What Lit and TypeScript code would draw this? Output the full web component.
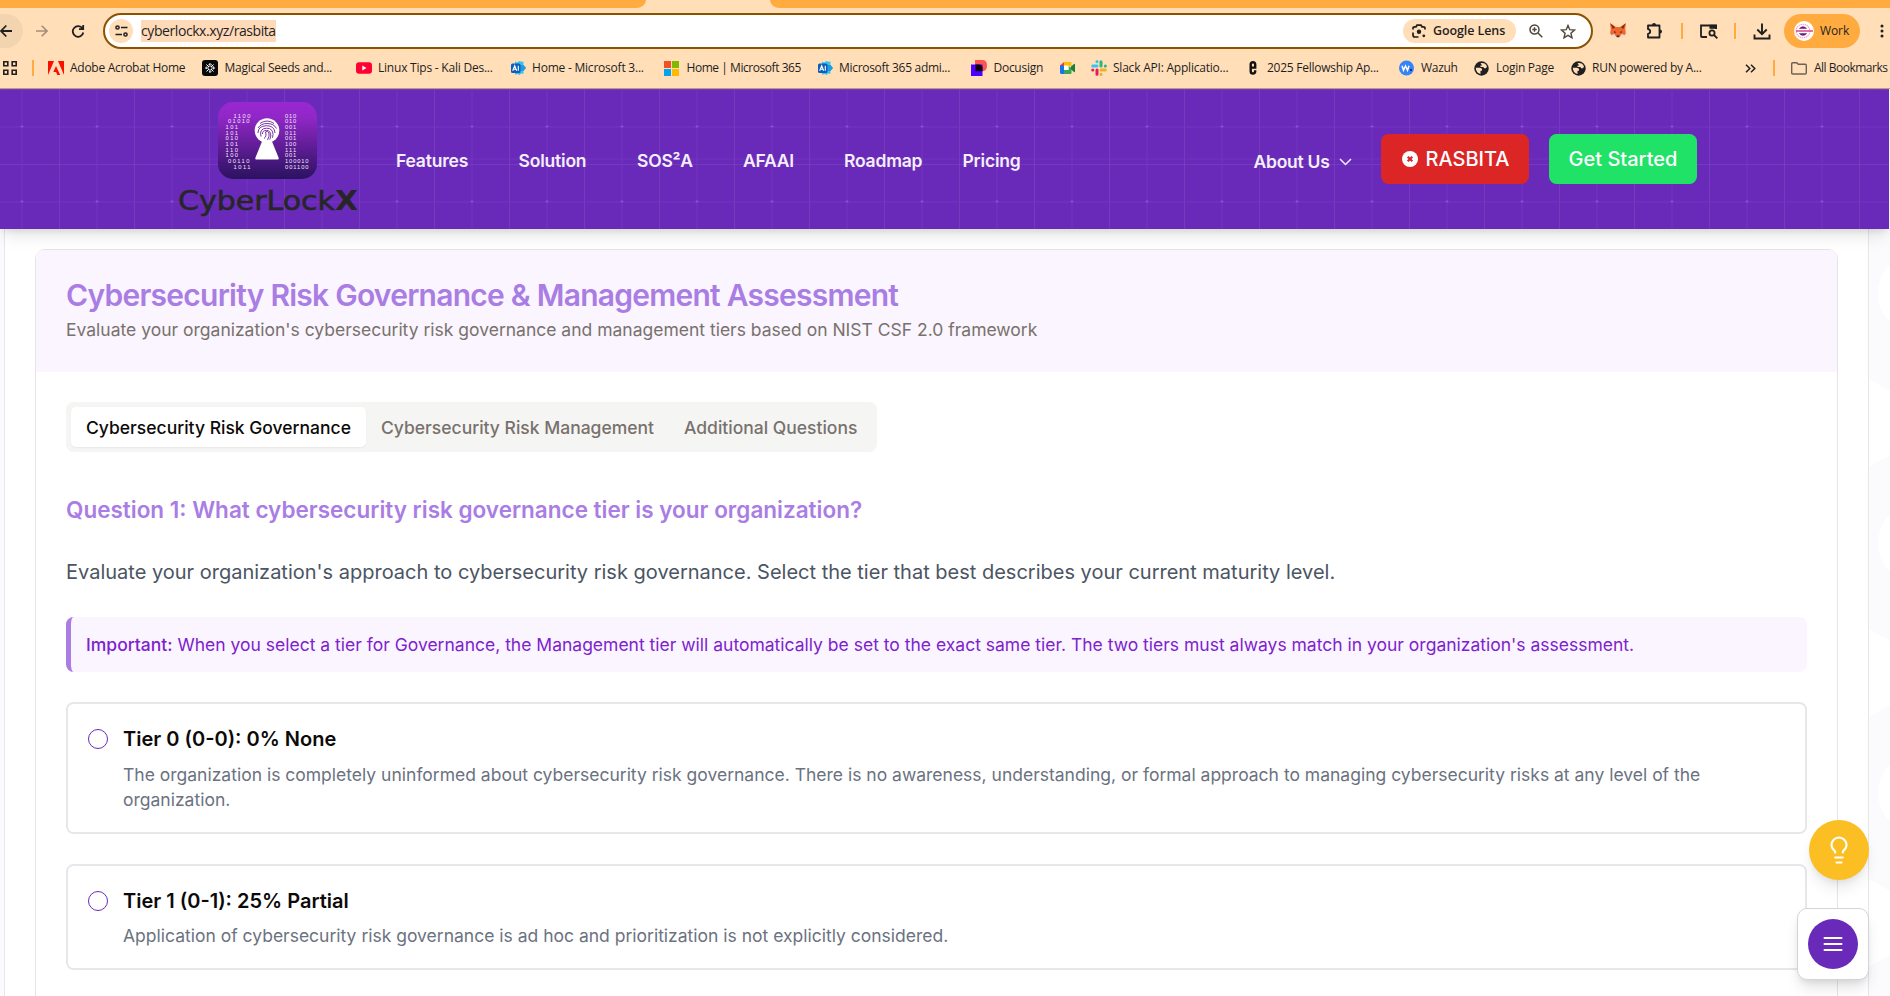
import { LitElement, html, svg, css, nothing } from "lit";
import { customElement, state } from "lit/decorators.js";

const adobe = svg`<svg width="16" height="16" viewBox="0 0 16 16"><path fill="#fa0f00" d="M0 1h6L0 15zM10 1h6v14zM8 6l4.200 9H9.300l-1.200-3H5.300z"/></svg>`;
const seeds = svg`<svg width="16" height="16" viewBox="0 0 16 16"><rect width="16" height="16" rx="3" fill="#0a0a0a"/><g stroke="#fff" stroke-width="1" fill="none"><path d="M8 3v10M3 8h10M4.500 4.500l7 7M11.500 4.500l-7 7"/><circle cx="8" cy="8" r="3.600" stroke-dasharray="1.500 1"/></g><circle cx="8" cy="8" r="1.300" fill="#0a0a0a"/></svg>`;
const tube = svg`<svg width="16" height="16" viewBox="0 0 16 16"><rect y="2.300" width="16" height="11.400" rx="3" fill="#ff0033"/><path fill="#fff" d="M6.300 5.600v4.800L10.500 8z"/></svg>`;
const admin = svg`<svg width="15" height="16" viewBox="0 0 15 16"><path fill="#35c1f1" d="M4 1.500l2 1L8.500 1l2 .8 2-.3-.2 3.300 2.500 3-2.500 3 .2 3-2.500-.2L8.500 15l-2-1-2.500.8z"/><path fill="#1f9ce0" d="M9 5h3.500L15 8l-2.500 3H9z"/><rect y="3.500" width="9.500" height="9.500" rx="1.500" fill="#0f5fb8"/><path stroke="#fff" stroke-width="1.100" fill="none" d="M1.700 10.700l2-5 2 5M2.400 9.200h2.700M7.300 5.700v5"/></svg>`;
const ms = svg`<svg width="15" height="15" viewBox="0 0 15 15"><path fill="#f25022" d="M0 0h7v7H0z"/><path fill="#7fba00" d="M8 0h7v7H8z"/><path fill="#00a4ef" d="M0 8h7v7H0z"/><path fill="#ffb900" d="M8 8h7v7H8z"/></svg>`;
const docu = svg`<svg width="16" height="16" viewBox="0 0 16 16"><path fill="#ff5252" d="M4 0h7.500Q16 0 16 5.500 16 11 11.500 11.300H4z"/><path fill="#4c00ff" d="M0 4.500h11.500V16H0z"/><path fill="#0c0010" d="M4.500 4.500h4Q11.500 5 11.500 8v3.300h-7z"/></svg>`;
const meet = svg`<svg width="15" height="14" viewBox="0 0 15 14"><path fill="#1a73e8" d="M0 4h4v9H1.500Q0 13 0 11.500z"/><path fill="#ea4335" d="M4 1v3.500H0z"/><path fill="#fbbc04" d="M4 1h6.500q1 0 1 1v3H4z"/><path fill="#34a853" d="M4 9h4.500V5l3 2v5q0 1-1 1H4z"/><path fill="#188038" d="M11 5.500l3-2.500q1-.5 1 .5v7q0 1-1 .4l-3-2.500z"/><path fill="#fff" d="M4 4.500h4.500V9H4z"/></svg>`;
const slack = svg`<svg width="16" height="16" viewBox="0 0 16 16" stroke-width="3" stroke-linecap="round"><path stroke="#36c5f0" d="M6 5.900H1.700M6 1.600v.1"/><path stroke="#2eb67d" d="M10 1.700V5.900M14.300 5.900h.1"/><path stroke="#ecb22e" d="M10 10h4.300M10 14.300v.1"/><path stroke="#e01e5a" d="M6 10v4.300M1.700 10h.1"/></svg>`;
const fellow = svg`<svg width="8" height="16" viewBox="0 0 8 16"><path fill="none" stroke="#111" stroke-width="2.400" d="M1.800 7.600h4.400V4.500Q6.200 2.200 4 2.200 1.700 2.200 1.700 4.500v6.800Q1.700 13.600 4 13.600q2.200 0 2.200-2.300v-1"/></svg>`;
const wazuh = svg`<svg width="15" height="16" viewBox="0 0 15 16"><circle cx="7.500" cy="8" r="7.500" fill="#3585f9"/><path fill="none" stroke="#fff" stroke-width="1.500" d="M3 5.800l1.500 4.500L6.500 6l2 4.300L10 5.800"/><circle cx="12" cy="10" r=".9" fill="#002"/></svg>`;
const globe = svg`<svg width="15" height="15" viewBox="0 0 15 15"><circle cx="7.500" cy="7.500" r="7.200" fill="#1f1f1f"/><path fill="#ffdeb8" d="M1.800 6.700h4q2.200 0 2.200 1.500v1.600H6.500v3.300Q2 12 1.800 6.700zM6.500 2.200q5-.7 6.500 3.300l-1 1.700h-1.700L9.300 6H6.500V4.500h1.700z"/></svg>`;

interface Mark { w: number; icon: unknown; iw: number; label?: string; ls?: number }

const MARKS: Mark[] = [
  { w: 154, icon: adobe, iw: 22, label: "Adobe Acrobat Home", ls: -0.27 },
  { w: 154, icon: seeds, iw: 22.5, label: "Magical Seeds and...", ls: -0.26 },
  { w: 155, icon: tube, iw: 22, label: "Linux Tips - Kali Des...", ls: -0.22 },
  { w: 153, icon: admin, iw: 21, label: "Home - Microsoft 3...", ls: -0.22 },
  { w: 154, icon: ms, iw: 22.5, label: "Home | Microsoft 365", ls: -0.45 },
  { w: 153, icon: admin, iw: 21, label: "Microsoft 365 admi...", ls: -0.3 },
  { w: 89, icon: docu, iw: 22.5, label: "Docusign", ls: -0.27 },
  { w: 31, icon: meet, iw: 15 },
  { w: 158, icon: slack, iw: 22, label: "Slack API: Applicatio...", ls: -0.22 },
  { w: 150, icon: fellow, iw: 18, label: "2025 Fellowship Ap...", ls: -0.25 },
  { w: 75, icon: wazuh, iw: 22, label: "Wazuh", ls: -0.3 },
  { w: 97, icon: globe, iw: 22, label: "Login Page", ls: -0.28 },
  { w: 174, icon: globe, iw: 21, label: "RUN powered by A...", ls: -0.26 },
];

@customElement("browser-chrome")
export class BrowserChrome extends LitElement {
  static styles = css`
    :host { display: block; height: 89px; background: #ffdeb8; color: #1f1f1f; box-sizing: border-box; border-bottom: 1px solid #b99c83; font: 12px/16px "Open Sans", "Noto Sans", sans-serif; }
    svg { display: block; flex: none; }
    .tabs { display: flex; justify-content: space-between; height: 8px; }
    .tab { background: #ffab40; height: 8px; }
    .t1 { width: 646px; border-bottom-right-radius: 10px 8px; }
    .t2 { width: 1120px; border-bottom-left-radius: 10px 8px; }
    .bar { display: flex; align-items: center; height: 46px; }
    .nav { display: flex; align-items: center; width: 103px; }
    .back { width: 23px; height: 34px; border-radius: 0 17px 17px 0; background: #f3d4b1; display: flex; align-items: center; }
    .fwd { margin-left: 12px; } .rel { margin-left: 22px; }
    .omni { box-sizing: border-box; width: 1490px; height: 36px; border: 2px solid #8a5300; border-radius: 18px; background: #fff; display: flex; align-items: center; padding-left: 4px; }
    .tune { width: 24px; height: 24px; border-radius: 50%; background: #ffdeb8; display: flex; align-items: center; justify-content: center; }
    .url { margin-left: 8px; background: #ffdab8; height: 22px; line-height: 22px; font-size: 14px; width: 135px; white-space: nowrap; letter-spacing: -0.42px; }
    .lens { margin-left: auto; width: 113px; height: 24px; border-radius: 12px; background: #ffdeb8; display: flex; align-items: center; font-weight: 600; font-size: 12.500px; box-sizing: border-box; padding-left: 9px; gap: 7px; white-space: nowrap; letter-spacing: -0.1px; }
    .zoom { margin-left: 13px; } .star { margin: 0 15px 0 17px; }
    .ext { display: flex; align-items: center; flex: 1; }
    .sep { width: 2px; height: 16px; background: #ffab40; flex: none; }
    .fox { margin-left: 17px; } .puz { margin: 0 17px 0 20px; } .side { margin: 0 16px 0 17px; } .dl { margin: 0 13px 0 17px; }
    .work { width: 76px; height: 34px; border-radius: 17px; background: #ffab40; display: flex; align-items: center; gap: 6px; padding-left: 10px; box-sizing: border-box; flex: none; letter-spacing: -0.1px; }
    .more { margin-left: 20px; }
    .marks { display: flex; align-items: center; height: 28px; white-space: nowrap; }
    .apps { margin: 0 15px 0 3px; }
    .lead { margin-right: 14px; }
    .mark { display: flex; align-items: center; flex: none; }
    .ico { flex: none; letter-spacing: 0; }
    .chev { margin-right: 17px; } .fold { margin: 0 7px 0 16px; }
    .all { letter-spacing: -0.5px; }
  `;
  render() {
    return html`
      <div class="tabs"><div class="tab t1"></div><div class="tab t2"></div></div>
      <div class="bar">
        <div class="nav">
          <div class="back"><svg width="13" height="14" viewBox="0 0 13 14" fill="none" stroke="#1f1f1f" stroke-width="1.800"><path d="M12 7H1M6.300 1.500L1 7l5.300 5.500"/></svg></div>
          <svg class="fwd" width="13" height="14" viewBox="0 0 13 14" fill="none" stroke="#a38f79" stroke-width="1.600"><path d="M1 7h11M6.700 1.700L12 7l-5.300 5.300"/></svg>
          <svg class="rel" width="16" height="14" viewBox="0 0 16 14" fill="none" stroke="#1f1f1f" stroke-width="1.800"><path d="M12.500 4.500A5.300 5.300 0 1 0 13.300 8.500M13.200 1v4.200H9"/></svg>
        </div>
        <div class="omni">
          <div class="tune"><svg width="13" height="12" viewBox="0 0 13 12" fill="none" stroke="#1f1f1f" stroke-width="1.500"><circle cx="2.500" cy="2.500" r="1.600"/><path d="M6 2.500h6.500M.5 9.500H7"/><circle cx="10.500" cy="9.500" r="1.600"/></svg></div>
          <div class="url">cyberlockx.xyz/rasbita</div>
          <div class="lens"><svg width="14" height="14" viewBox="0 0 14 14" fill="none" stroke="#1f1f1f" stroke-width="1.700"><path d="M1 5.500V4.200Q1 2.800 2.500 2.800H4L5 1.200h4l1 1.600h1.500Q13 2.800 13 4.200v1.300M1 8.500V11q0 2 2 2h3.500"/><circle cx="7" cy="7.800" r="2.200" fill="#1f1f1f" stroke="none"/><circle cx="11.800" cy="11.800" r="1.400" fill="#1f1f1f" stroke="none"/></svg>Google Lens</div>
          <svg class="zoom" width="14" height="14" viewBox="0 0 14 14" fill="none" stroke="#50473c" stroke-width="1.500"><circle cx="5.500" cy="5.500" r="4.500"/><path d="M9 9l4.300 4.300M3.300 5.500h4.400M5.500 3.300v4.400"/></svg>
          <svg class="star" width="16" height="15" viewBox="0 0 16 15" fill="none" stroke="#50473c" stroke-width="1.400"><path d="M8 1.500l1.800 4.200 4.700.4-3.600 3.100 1.100 4.600L8 11.400l-4 2.400 1.100-4.600L1.500 6.100l4.700-.4z"/></svg>
        </div>
        <div class="ext">
          <svg class="fox" width="16" height="16" viewBox="0 0 16 16"><path fill="#f0662b" d="M0 0l6 4h4l6-4-.8 6 .6 4-1.800 4-3-1-2 1.500H7L5 13l-3 1L.2 10l.6-4z"/><path fill="#7a2d12" d="M.5.500L5 4.300 2.800 6zM15.500.500L11 4.300 13.200 6z"/><path fill="#f0ddd0" d="M1 12l3.500-1 2 3.500L5 15l-3.500-.3zM15 12l-3.500-1-2 3.500 1.500.5 3.500-.3z"/><path fill="#233447" d="M4 8l2.500 1.300L4.500 10zM12 8L9.500 9.300l2 .7zM6.500 12.500h3L9 14H7z"/></svg>
          <svg class="puz" width="18" height="18" viewBox="0 0 18 18" fill="none" stroke="#1f1f1f" stroke-width="1.800" stroke-linejoin="round"><path d="M2 3.500h11.500V15.500H2v-3.700q2.200-.3 2.200-2.300T2 7.200z"/><path fill="#1f1f1f" stroke="none" d="M6 3a2 2 0 0 1 4 0zM14 7.500a2 2 0 0 1 0 4z"/></svg>
          <div class="sep"></div>
          <svg class="side" width="18" height="16" viewBox="0 0 18 16" fill="none" stroke="#1f1f1f" stroke-width="1.800"><path d="M7 14H2Q1 14 1 13V2.500h15V6"/><path d="M9.500 3.800H17" stroke-width="4"/><circle cx="12" cy="10" r="2.600"/><path d="M14 12l3.300 3.300"/></svg>
          <div class="sep"></div>
          <svg class="dl" width="18" height="17" viewBox="0 0 18 17" fill="none" stroke="#1f1f1f" stroke-width="1.900"><path d="M9 .5v10.500M4.300 6.500L9 11.200l4.700-4.700M1.500 11.500v4h15v-4"/></svg>
          <div class="work"><svg width="20" height="20" viewBox="0 0 20 20"><circle cx="10" cy="10" r="10" fill="#fff"/><circle cx="9" cy="10" r="6.800" fill="none" stroke="#f09cc4" stroke-width="1.100" stroke-dasharray="1.500 .6"/><path d="M4.800 7.800Q9 2.500 13.200 7.800zM4.800 12.200q4.200 5 8.400 0z" fill="#6a1b7d"/><path d="M2 10h17" stroke="#d8397f" stroke-width="1.400"/></svg>Work</div>
          <svg class="more" width="4" height="14" viewBox="0 0 4 14" fill="#1f1f1f"><circle cx="2" cy="2" r="1.500"/><circle cx="2" cy="7" r="1.500"/><circle cx="2" cy="12" r="1.500"/></svg>
        </div>
      </div>
      <div class="marks">
        <svg class="apps" width="14" height="14" viewBox="0 0 14 14" fill="none" stroke="#1f1f1f" stroke-width="1.600"><path d="M.8.8h4v4h-4zM9.200.8h4v4h-4zM.8 9.200h4v4h-4zM9.200 9.200h4v4h-4z"/></svg>
        <div class="sep lead"></div>
        ${MARKS.map((m) => html`<div class="mark" style="width:${m.w}px;letter-spacing:${m.ls ?? 0}px"><div class="ico" style="width:${m.iw}px">${m.icon}</div>${m.label ?? nothing}</div>`)}
        <svg class="chev" width="11" height="9" viewBox="0 0 11 9" fill="none" stroke="#1f1f1f" stroke-width="1.500"><path d="M1 .7l3.800 3.800L1 8.300M6 .7l3.800 3.800L6 8.300"/></svg>
        <div class="sep"></div>
        <svg class="fold" width="16" height="13" viewBox="0 0 16 13" fill="none" stroke="#6b6257" stroke-width="1.400"><path d="M.7 11V1.700Q.7.7 1.700.7h4l1.600 1.600h7q1 0 1 1V11q0 1-1 1h-12.600q-1 0-1-1z"/></svg>
        <span class="all">All Bookmarks</span>
      </div>`;
  }
}

const LEFT_BITS: [number, string][] = [[16, "1100"], [10.5, "01010"], [8, "101"], [8, "101"], [8, "010"], [8, "101"], [8, "110"], [8, "100"], [10.5, "00110"], [16, "1011"]];
const RIGHT_BITS = ["010", "010", "001", "011", "001", "100", "111", "001", "100010", "001100"];

@customElement("site-header")
export class SiteHeader extends LitElement {
  static styles = css`
    :host { display: block; position: relative; z-index: 2; width: 1889px; height: 140px; color: #f4effb; background: #6929b9; box-shadow: 0 10px 15px -3px rgba(0,0,0,.1), 0 4px 6px -2px rgba(0,0,0,.09); font: 600 17.500px/25px Inter, sans-serif; }
    .grid { position: absolute; inset: 0; pointer-events: none; }
    .row { position: relative; height: 140px; display: flex; align-items: flex-start; box-sizing: border-box; padding: 0 0 0 177px; }
    .logo { display: block; margin-top: 12px; }
    .links { display: grid; grid-template-columns: 122.500px 118.500px 106px 101px 118.500px auto; margin: 59px 0 0 35px; letter-spacing: -0.2px; white-space: nowrap; }
    .about { display: flex; align-items: center; gap: 9px; margin: 60px 0 0 auto; letter-spacing: -0.25px; width: 127.500px; white-space: nowrap; }
    .btn { box-sizing: border-box; width: 148px; height: 50px; margin-top: 45px; border-radius: 7.500px; display: flex; align-items: center; justify-content: center; gap: 7px; font-weight: 500; font-size: 20px; color: #fff; white-space: nowrap; }
    .red { background: #dc2626; padding-left: 2px; } .green { background: #20e267; margin: 45px 192px 0 20px; }
  `;
  render() {
    return html`
      <svg class="grid" width="1889" height="140">
        <defs><pattern id="g" width="75" height="75" patternUnits="userSpaceOnUse">
          <path d="M59.500 0V75M0 .5H75" stroke="#7b48bf" stroke-opacity=".6" fill="none"/>
          <path d="M22 0V75M0 38H75" stroke="#7236be" stroke-width="2" stroke-opacity=".55" fill="none"/>
          <path d="M20.500 37.500h3M22 36v3" stroke="#8750cc" fill="none"/>
        </pattern></defs>
        <rect width="1889" height="140" fill="url(#g)"/>
        <path d="M174 70H1549" stroke="#7438bf" stroke-width="2" stroke-opacity=".35"/>
      </svg>
      <div class="row">
        <svg class="logo" width="184" height="120" viewBox="177 101 184 120">
          <defs><linearGradient id="lg" x1="0" y1="0" x2="0" y2="1"><stop offset="0" stop-color="#9a27d2"/><stop offset=".2" stop-color="#9027c6"/><stop offset="1" stop-color="#2b1260"/></linearGradient></defs>
          <rect x="218" y="102" width="99" height="77" rx="15" fill="url(#lg)"/>
          <g font-family="Liberation Sans, sans-serif" font-size="5.800" fill="#f1e8fa" font-weight="400">
            ${LEFT_BITS.map(([x, t], i) => svg`<text x=${217.5 + x} y=${117.6 + i * 5.67} textLength=${t.length * 4.5 - 1}>${t}</text>`)}
            ${RIGHT_BITS.map((t, i) => svg`<text x="285" y=${117.6 + i * 5.67} textLength=${t.length * 4.1 - 1}>${t}</text>`)}
          </g>
          <circle cx="267" cy="130.500" r="12.300" fill="#fff"/>
          <path fill="#fff" d="M263 139h8l7.700 19q.3 1.500-1 1.500h-21.400q-1.300 0-1-1.500z"/>
          <g fill="none" stroke="#6a1c9c" stroke-width=".9"><path d="M260 123.500q7-5 14 0M258 128q3-4.500 9-4.500 7 0 9.500 5M258 133q0-7 8.500-7.300 8 0 8.500 7.300M261 136.500q-2-8 5.500-8.300 6.500 0 6.500 6.500l-.5 3M264 138.500q3-2 1.500-6.500 2-2 3.500 1 .8 3-1.500 7M262.500 134q-.3-3.500 4-3.600 4.500.2 4.300 5.600l-1 3.500"/></g>
          <text x="178" y="210" font-family="DejaVu Sans, sans-serif" font-size="26" font-weight="400" fill="#262626" stroke="#262626" stroke-width=".5" textLength="157" lengthAdjust="spacingAndGlyphs">CyberLock</text>
          <text x="335" y="210" font-family="DejaVu Sans, sans-serif" font-size="27" font-weight="700" fill="#262626" textLength="23" lengthAdjust="spacingAndGlyphs">X</text>
        </svg>
        <nav class="links"><span>Features</span><span>Solution</span><span>SOS²A</span><span>AFAAI</span><span>Roadmap</span><span>Pricing</span></nav>
        <div class="about">About Us<svg width="13" height="8" viewBox="0 0 13 8" fill="none" stroke="#f4effb" stroke-width="1.500"><path d="M1 1l5.500 5.500L12 1"/></svg></div>
        <div class="btn red"><svg width="16" height="16" viewBox="0 0 16 16"><circle cx="8" cy="8" r="8" fill="#fff"/><path d="M5.700 5.700l4.600 4.600M10.300 5.700l-4.600 4.600" stroke="#dc2626" stroke-width="2.200"/></svg>RASBITA</div>
        <div class="btn green">Get Started</div>
      </div>`;
  }
}

const TIERS = [
  { title: "Tier 0 (0-0): 0% None", text: "The organization is completely uninformed about cybersecurity risk governance. There is no awareness, understanding, or formal approach to managing cybersecurity risks at any level of the organization." },
  { title: "Tier 1 (0-1): 25% Partial", text: "Application of cybersecurity risk governance is ad hoc and prioritization is not explicitly considered." },
];

@customElement("assessment-panel")
export class AssessmentPanel extends LitElement {
  @state() private tab = 0;
  static styles = css`
    :host { display: grid; grid-template-columns: 1865px 21px; height: 767px; overflow: hidden; background: #fbfbfe; font: 17.500px/25px Inter, sans-serif; padding-left: 4px; box-sizing: border-box; }
    .outer { box-sizing: border-box; height: 767px; background: #fff; border: solid #e5e7eb; border-width: 0 1px; padding: 20px 30px 0; }
    .deco { display: block; }
    .card { box-sizing: border-box; height: 900px; border: 1px solid #e5e5e5; border-radius: 10px; }
    .head { background: #faf5ff; height: 122px; box-sizing: border-box; padding: 30px 30px 0; border-radius: 8px 8px 0 0; }
    h1 { margin: 0; font-size: 30px; line-height: 30px; font-weight: 600; letter-spacing: -0.75px; color: #a97de3; }
    .sub { color: #78716c; margin-top: 7px; }
    .body { padding: 30px; }
    .tabs { display: flex; width: 811px; height: 50px; box-sizing: border-box; padding: 5px; border-radius: 7.500px; background: #f5f5f4; color: #78716c; font-weight: 500; white-space: nowrap; }
    .tab { padding: 7.500px 15px; border-radius: 5px; height: 40px; box-sizing: border-box; }
    .on { background: #fff; color: #0c0a09; box-shadow: 0 1px 2px rgba(0,0,0,.06); }
    h2 { margin: 43px 0 0; font-size: 22.500px; line-height: 30px; font-weight: 600; color: #a97de3; }
    .lede { margin: 32px 0 0; font-size: 20px; line-height: 30px; color: #4b5563; }
    .note { margin-top: 30px; height: 55px; box-sizing: border-box; border-left: 5px solid #a97de3; border-radius: 7.500px; background: #faf5ff; color: #7e22ce; padding: 15px; }
    .note b { font-weight: 500; }
    .tier { margin-top: 30px; box-sizing: border-box; border: 2px solid #e5e7eb; border-radius: 7.500px; padding: 20px; display: flex; gap: 15px; }
    .dot { box-sizing: border-box; width: 20px; height: 20px; border: 1px solid #6929b9; border-radius: 50%; margin-top: 5px; flex: none; }
    .name { font-size: 20px; line-height: 30px; font-weight: 600; color: #0c0a09; }
    .desc { margin-top: 7.500px; color: #6b7280; }
  `;
  render() {
    const tabs = ["Cybersecurity Risk Governance", "Cybersecurity Risk Management", "Additional Questions"];
    return html`<div class="outer"><section class="card">
      <div class="head"><h1>Cybersecurity Risk Governance &amp; Management Assessment</h1>
        <div class="sub">Evaluate your organization's cybersecurity risk governance and management tiers based on NIST CSF 2.0 framework</div></div>
      <div class="body">
        <div class="tabs">${tabs.map((t, i) => html`<div class="tab ${i === this.tab ? "on" : ""}" @click=${() => (this.tab = i)}>${t}</div>`)}</div>
        <h2>Question 1: What cybersecurity risk governance tier is your organization?</h2>
        <p class="lede">Evaluate your organization's approach to cybersecurity risk governance. Select the tier that best describes your current maturity level.</p>
        <div class="note"><b>Important:</b> When you select a tier for Governance, the Management tier will automatically be set to the exact same tier. The two tiers must always match in your organization's assessment.</div>
        ${TIERS.map((t) => html`<div class="tier"><div class="dot"></div><div><div class="name">${t.title}</div><div class="desc">${t.text}</div></div></div>`)}
      </div></section></div>
      <svg class="deco" width="21" height="767" fill="#fff">${[-100, 150, 400, 650].map((y) => svg`<path d=${`M0 ${y}l21 12v64l-21 12z`}/><ellipse cx="36" cy=${y - 86} rx="27" ry="34"/>`)}</svg>`;
  }
}

@customElement("app-root")
export class AppRoot extends LitElement {
  static styles = css`
    :host { display: block; position: relative; width: 1890px; height: 996px; overflow: hidden; background: #fff; }
    .float { position: absolute; z-index: 3; display: flex; align-items: center; justify-content: center; box-sizing: border-box; }
    .tip { left: 1809px; top: 820px; width: 60px; height: 60px; border-radius: 50%; background: #fbbf24; box-shadow: 0 10px 15px -3px rgba(0,0,0,.1), 0 4px 6px -2px rgba(0,0,0,.06); }
    .menu { left: 1797px; top: 908px; width: 72px; height: 72px; border-radius: 10px; background: #fff; border: 1px solid #d1d5db; box-shadow: 0 10px 15px -3px rgba(0,0,0,.12), 0 4px 6px -2px rgba(0,0,0,.08); }
    .disc { width: 50px; height: 50px; border-radius: 50%; background: #6929b9; display: flex; align-items: center; justify-content: center; }
  `;
  render() {
    return html`<browser-chrome></browser-chrome><site-header></site-header><assessment-panel></assessment-panel>
      <div class="float tip"><svg width="30" height="30" viewBox="0 0 24 24" fill="none" stroke="#fff" stroke-width="1.700" stroke-linecap="round" stroke-linejoin="round"><path d="M15 14c.2-1 .7-1.700 1.500-2.500 1-.9 1.500-2.200 1.500-3.500A6 6 0 0 0 6 8c0 1 .2 2.200 1.500 3.500.7.7 1.300 1.500 1.500 2.500M9 18h6M10 22h4"/></svg></div>
      <div class="float menu"><div class="disc"><svg width="20" height="16" viewBox="0 0 20 16" fill="none" stroke="#fff" stroke-width="2" stroke-linecap="round"><path d="M1.500 2h17M1.500 8h17M1.500 14h17"/></svg></div></div>`;
  }
}
